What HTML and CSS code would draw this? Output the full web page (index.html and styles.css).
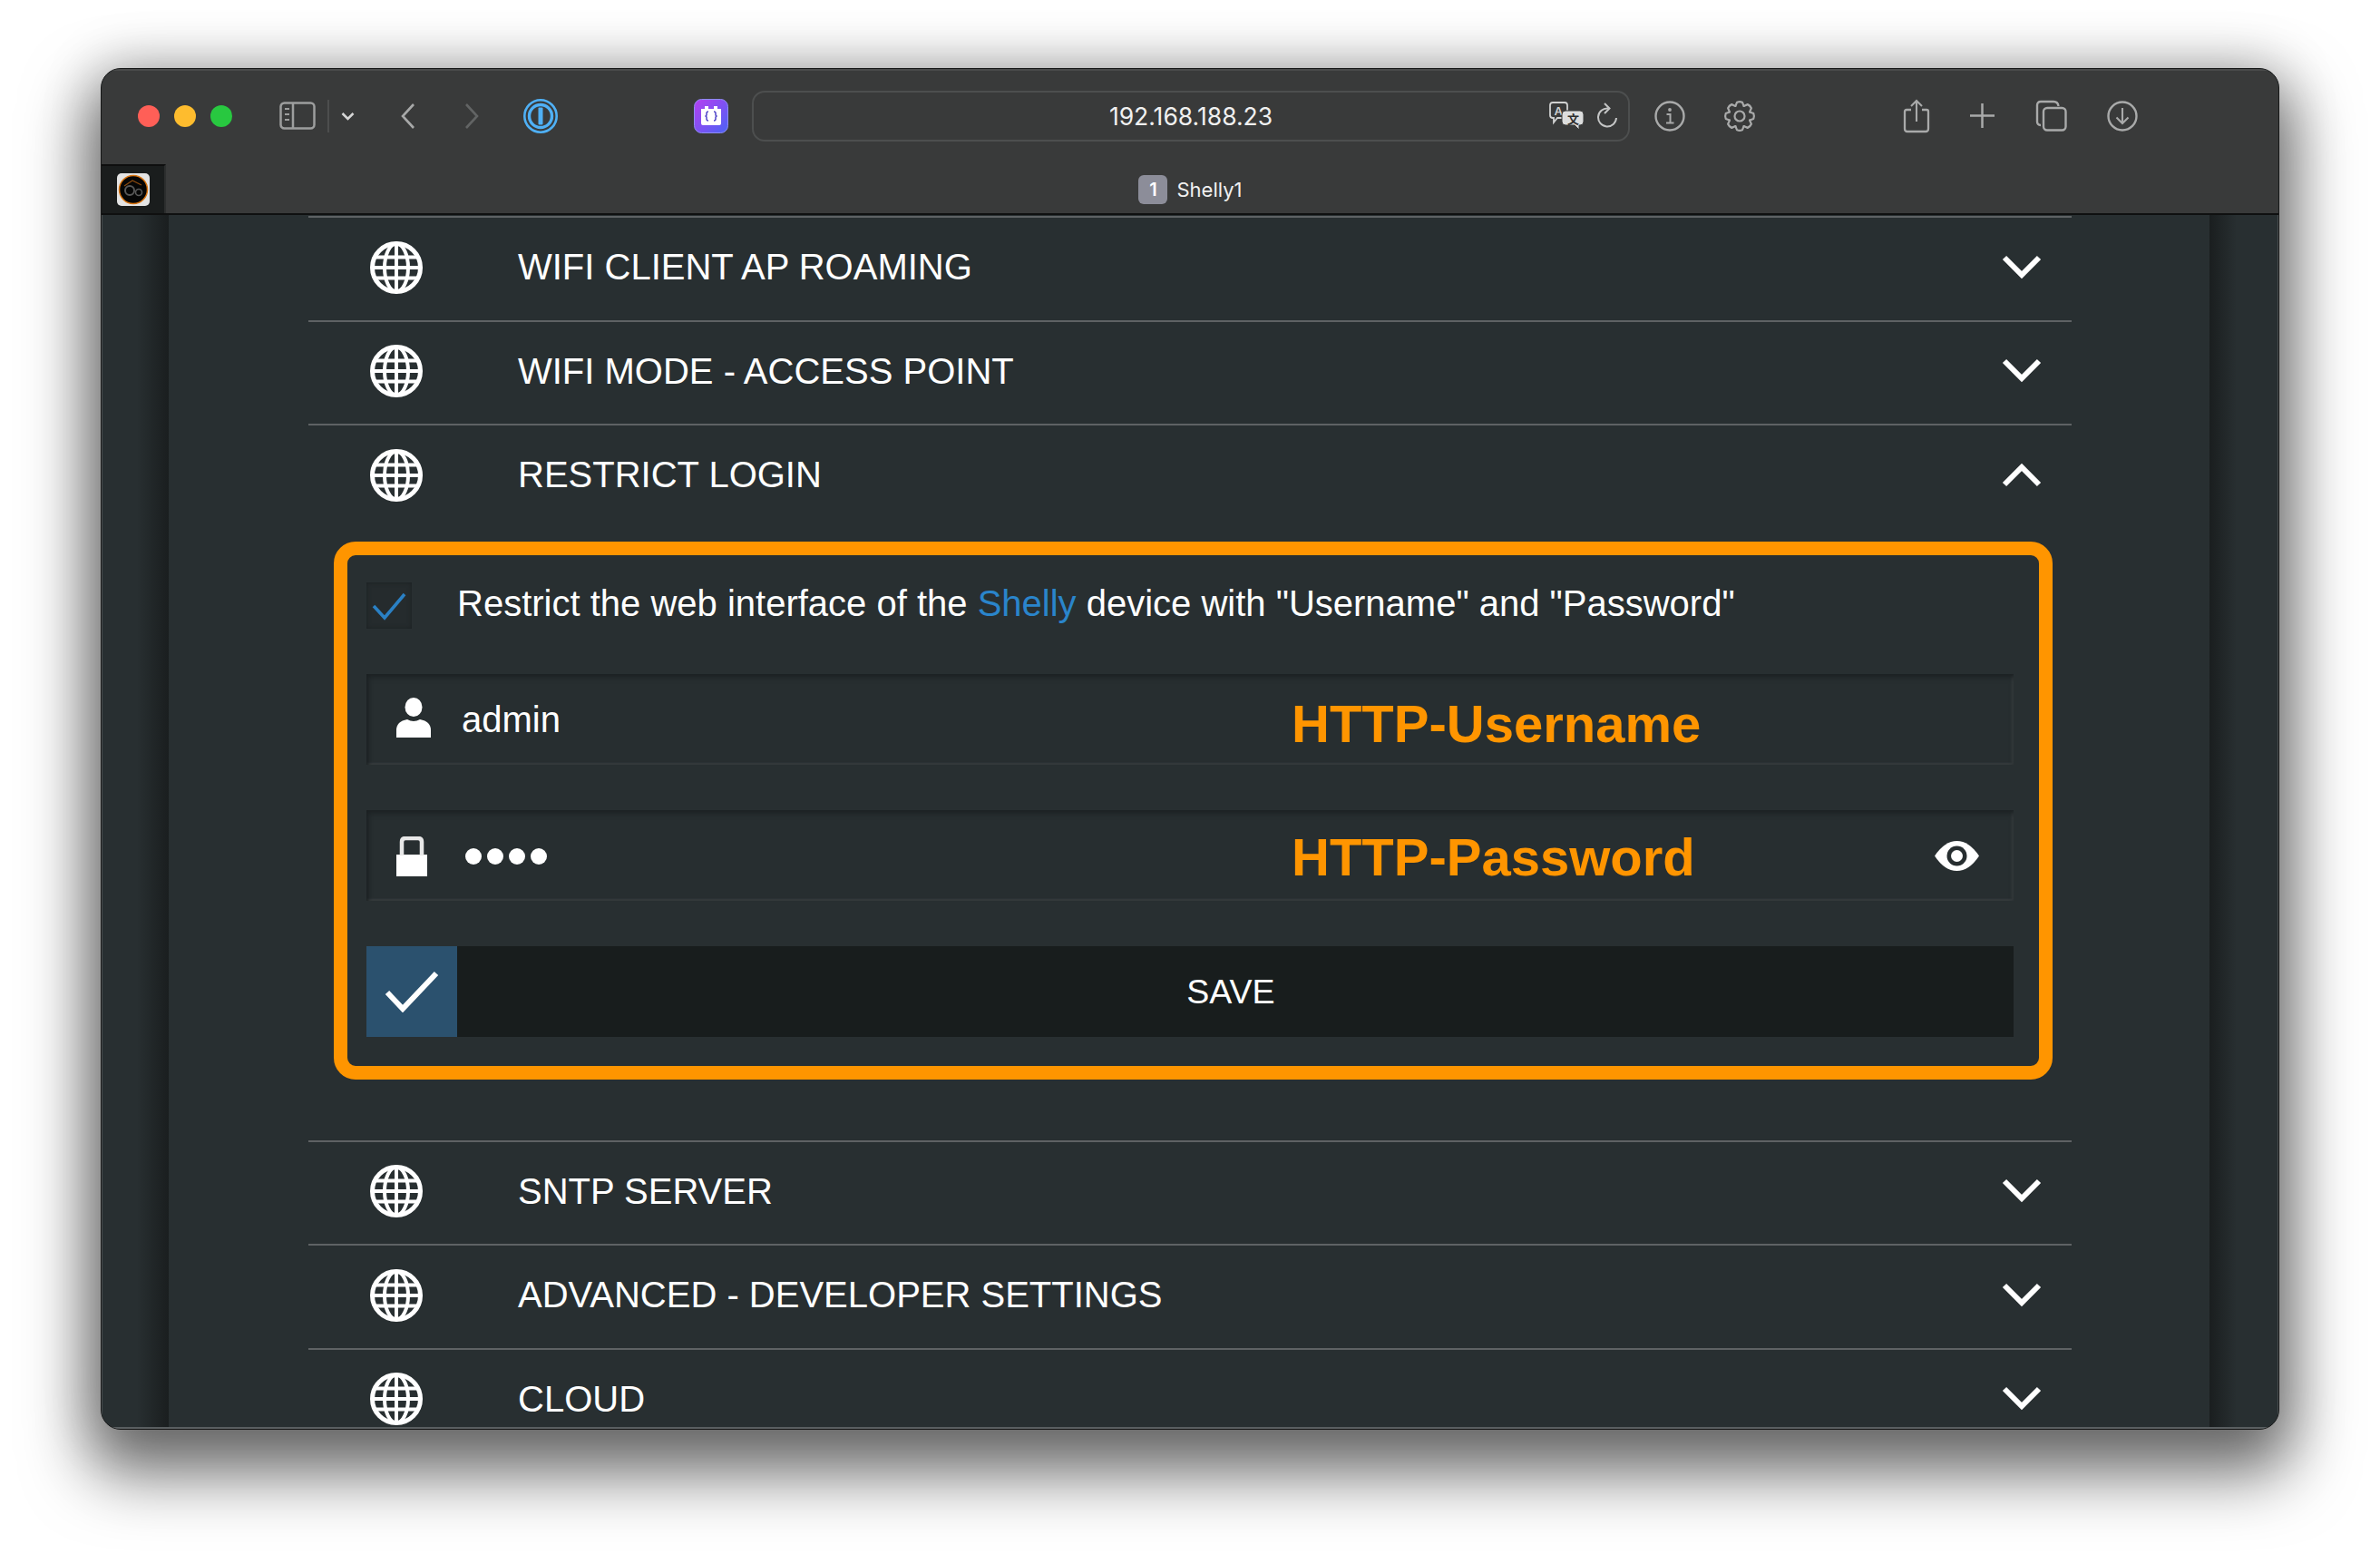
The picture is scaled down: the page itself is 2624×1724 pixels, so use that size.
FILE: index.html
```html
<!DOCTYPE html>
<html lang="en">
<head>
<meta charset="utf-8">
<title>Shelly1</title>
<link rel="stylesheet" href="styles.css">
</head>
<body>
<svg class="defs" width="0" height="0" aria-hidden="true">
  <defs>
    <symbol id="globe" viewBox="0 0 58 58">
      <circle cx="29" cy="29" r="26.500" fill="none" stroke="#fff" stroke-width="5"/>
      <ellipse cx="29" cy="29" rx="13" ry="26.500" fill="none" stroke="#fff" stroke-width="4"/>
      <path d="M29 3V55M5 17.500H53M3 29H55M5 40.500H53" fill="none" stroke="#fff" stroke-width="4"/>
    </symbol>
    <symbol id="down" viewBox="0 0 44 28">
      <path d="M3 4L22 23L41 4" fill="none" stroke="#fff" stroke-width="6"/>
    </symbol>
    <symbol id="up" viewBox="0 0 44 28">
      <path d="M3 24L22 5L41 24" fill="none" stroke="#fff" stroke-width="6"/>
    </symbol>
    <path id="gear-tooth" d="M-4.600 -11.100L-2.900 -15.300Q0 -16.500 2.900 -15.300L4.600 -11.100" fill="none" stroke="#a9aaaa" stroke-width="2.200" stroke-linejoin="round" stroke-linecap="round"/>
  </defs>
</svg>
<div class="window">
  <header class="toolbar">
    <div class="nav-row">
      <span class="light light-red"></span>
      <span class="light light-yellow"></span>
      <span class="light light-green"></span>
      <svg class="ti sidebar-ic" width="40" height="31" viewBox="0 0 40 31"><rect x="1.500" y="1.500" width="37" height="28" rx="4" fill="none" stroke="#9d9e9e" stroke-width="2.500"/><path d="M15 2V29" stroke="#9d9e9e" stroke-width="2.500"/><path d="M6 8H11M6 14H11M6 20H11" stroke="#9d9e9e" stroke-width="2"/></svg>
      <span class="vsep"></span>
      <svg class="ti chev-ic" width="15" height="10" viewBox="0 0 15 10"><path d="M1.500 2L7.500 8L13.500 2" fill="none" stroke="#d6d6d6" stroke-width="2.500"/></svg>
      <svg class="ti back-ic" width="17" height="30" viewBox="0 0 17 30"><path d="M15 2L3 15L15 28" fill="none" stroke="#a8a9a9" stroke-width="2.600"/></svg>
      <svg class="ti fwd-ic" width="17" height="30" viewBox="0 0 17 30"><path d="M2 2L14 15L2 28" fill="none" stroke="#626464" stroke-width="2.600"/></svg>
      <svg class="ti onep-ic" width="38" height="38" viewBox="0 0 38 38"><circle cx="19" cy="19" r="17.700" fill="none" stroke="#4fb0f5" stroke-width="2.600"/><circle cx="19" cy="19" r="12.500" fill="none" stroke="#4fb0f5" stroke-width="3.400"/><rect x="16.500" y="9.500" width="5" height="19" rx="1" fill="#4fb0f5"/></svg>
      <svg class="ti ext-ic" width="38" height="38" viewBox="0 0 38 38"><defs><linearGradient id="extg" x1="0" y1="0" x2="1" y2="1"><stop offset="0" stop-color="#b63ff0"/><stop offset="1" stop-color="#4a63f6"/></linearGradient></defs><rect x="0.500" y="0.500" width="37" height="37" rx="8" fill="url(#extg)" stroke="#8f8cf0"/><path d="M8 11H12V8H16V11H22V8H26V11H30V27Q30 29 28 29H10Q8 29 8 27Z" fill="#fff"/><path d="M16 14Q14 14 14 16V18L13 19L14 20V22Q14 24 16 24M22 14Q24 14 24 16V18L25 19L24 20V22Q24 24 22 24" fill="none" stroke="#5146c8" stroke-width="1.500"/></svg>
      <div class="urlbar">
        <span class="url-text">192.168.188.23</span>
        <svg class="ti translate-ic" width="39" height="32" viewBox="0 0 39 32"><path d="M4 1H17Q20 1 20 4V15Q20 18 17 18H9L5 23V18H4Q1 18 1 15V4Q1 1 4 1Z" fill="#393a3a" stroke="#d0d1d1" stroke-width="1.800"/><text class="tr-a" x="5.500" y="15">A</text><path d="M18 10H34Q38 10 38 14V22Q38 26 34 26H33V31L28 26H18Q14 26 14 22V14Q14 10 18 10Z" fill="#dcdddd" stroke="#393a3a" stroke-width="1"/><text class="tr-b" x="20" y="24">文</text></svg>
        <svg class="ti reload-ic" width="24" height="30" viewBox="0 0 24 30"><path d="M13 6.500A10 10 0 1 0 22 17" fill="none" stroke="#c4c5c5" stroke-width="2"/><path d="M9 1L14.500 6.500L9 12" fill="none" stroke="#c4c5c5" stroke-width="2"/></svg>
      </div>
      <svg class="ti info-ic" width="34" height="34" viewBox="0 0 34 34"><circle cx="17" cy="17" r="15.500" fill="none" stroke="#a9aaaa" stroke-width="2.400"/><circle cx="17" cy="10" r="1.900" fill="#a9aaaa"/><path d="M13.500 15H17.500V24M13 24.500H21.500" fill="none" stroke="#a9aaaa" stroke-width="2"/></svg>
      <svg class="ti gear-ic" width="36" height="36" viewBox="0 0 36 36"><g transform="translate(18 18)"><use href="#gear-tooth"/><use href="#gear-tooth" transform="rotate(45)"/><use href="#gear-tooth" transform="rotate(90)"/><use href="#gear-tooth" transform="rotate(135)"/><use href="#gear-tooth" transform="rotate(180)"/><use href="#gear-tooth" transform="rotate(225)"/><use href="#gear-tooth" transform="rotate(270)"/><use href="#gear-tooth" transform="rotate(315)"/><circle r="5.500" fill="none" stroke="#a9aaaa" stroke-width="2.200"/></g></svg>
      <svg class="ti share-ic" width="30" height="38" viewBox="0 0 30 38"><path d="M9 12H4Q2 12 2 14V33Q2 36 5 36H25Q28 36 28 33V14Q28 12 26 12H21" fill="none" stroke="#a9aaaa" stroke-width="2.300"/><path d="M15 25V2M9 8L15 2L21 8" fill="none" stroke="#a9aaaa" stroke-width="2.100"/></svg>
      <svg class="ti plus-ic" width="27" height="27" viewBox="0 0 27 27"><path d="M13.500 0V27M0 13.500H27" stroke="#a9aaaa" stroke-width="2.500"/></svg>
      <svg class="ti tabs-ic" width="35" height="35" viewBox="0 0 35 35"><path d="M6 28Q2 28 2 24V6Q2 2 6 2H20Q25 2 25.500 7" fill="none" stroke="#a9aaaa" stroke-width="2.400"/><rect x="9" y="9" width="24.500" height="24.500" rx="4" fill="#393a3a" stroke="#a9aaaa" stroke-width="2.400"/></svg>
      <svg class="ti dl-ic" width="34" height="34" viewBox="0 0 34 34"><circle cx="17" cy="17" r="15.500" fill="none" stroke="#a9aaaa" stroke-width="2.400"/><path d="M17 8V25M10.500 18.500L17 25L23.500 18.500" fill="none" stroke="#a9aaaa" stroke-width="2.100"/></svg>
    </div>
    <div class="tab-row">
      <div class="pinned">
        <svg width="36" height="36" viewBox="0 0 36 36"><rect width="36" height="36" rx="5" fill="#e4e4e4"/><circle cx="18" cy="18" r="15.500" fill="#060606" stroke="#d9740f" stroke-width="1.500"/><path d="M8 14L17 8L27 13" fill="none" stroke="#8a4a10" stroke-width="1.300"/><circle cx="14" cy="19" r="5" fill="none" stroke="#585858" stroke-width="2"/><circle cx="24" cy="21" r="3.500" fill="none" stroke="#585858" stroke-width="1.600"/></svg>
      </div>
      <div class="tab-title"><span class="tab-badge">1</span><span class="tab-name">Shelly1</span></div>
    </div>
  </header>
  <main class="content">
    <div class="gutter gutter-left"></div>
    <div class="panel">
      <section class="row">
        <svg class="globe"><use href="#globe"/></svg><span class="row-label">WIFI CLIENT AP ROAMING</span><svg class="arrow"><use href="#down"/></svg>
      </section>
      <section class="row">
        <svg class="globe"><use href="#globe"/></svg><span class="row-label">WIFI MODE - ACCESS POINT</span><svg class="arrow"><use href="#down"/></svg>
      </section>
      <section class="row">
        <svg class="globe"><use href="#globe"/></svg><span class="row-label">RESTRICT LOGIN</span><svg class="arrow arrow-up"><use href="#up"/></svg>
      </section>
      <div class="highlight">
        <div class="check-line">
          <span class="checkbox"><svg width="38" height="36" viewBox="0 0 38 36"><path d="M2 19L14 32L36 6" fill="none" stroke="#2a80c4" stroke-width="3.500"/></svg></span>
          <span class="check-text">Restrict the web interface of the <span class="brand">Shelly</span> device with "Username" and "Password"</span>
        </div>
        <div class="field">
          <svg class="field-ic user-ic" width="38" height="44" viewBox="0 0 38 44"><ellipse cx="19" cy="10.500" rx="9.500" ry="10.500" fill="#fff"/><path d="M0 44V36Q0 26 12 24Q19 28 26 24Q38 26 38 36V44Z" fill="#fff"/></svg>
          <span class="field-value">admin</span>
          <span class="field-note note-user">HTTP-Username</span>
        </div>
        <div class="field">
          <svg class="field-ic lock-ic" width="34" height="44" viewBox="0 0 34 44"><path d="M0 20H34V44H0Z" fill="#fff"/><path d="M6 21V6Q6 2 10 2H24Q28 2 28 6V21" fill="none" stroke="#e8e8e8" stroke-width="4.500"/></svg>
          <span class="dots"><i></i><i></i><i></i><i></i></span>
          <span class="field-note note-pass">HTTP-Password</span>
          <svg class="eye-ic" width="49" height="33" viewBox="0 0 49 33"><path d="M0 16.500Q11 0 24.500 0Q38 0 49 16.500Q38 33 24.500 33Q11 33 0 16.500Z" fill="#fff"/><circle cx="24.500" cy="16.500" r="11" fill="#272e30"/><circle cx="24.500" cy="16.500" r="6.500" fill="#fff"/></svg>
        </div>
        <button class="save" type="button">
          <span class="save-mark"><svg width="60" height="46" viewBox="0 0 60 46"><path d="M3 24L20 42L57 3" fill="none" stroke="#fff" stroke-width="6"/></svg></span>
          <span class="save-label">SAVE</span>
        </button>
      </div>
      <section class="row row-after">
        <svg class="globe"><use href="#globe"/></svg><span class="row-label">SNTP SERVER</span><svg class="arrow"><use href="#down"/></svg>
      </section>
      <section class="row">
        <svg class="globe"><use href="#globe"/></svg><span class="row-label">ADVANCED - DEVELOPER SETTINGS</span><svg class="arrow"><use href="#down"/></svg>
      </section>
      <section class="row">
        <svg class="globe"><use href="#globe"/></svg><span class="row-label">CLOUD</span><svg class="arrow"><use href="#down"/></svg>
      </section>
    </div>
    <div class="gutter gutter-right"></div>
  </main>
</div>
</body>
</html>
```
FILE: styles.css
```css
* { box-sizing: border-box; }
html, body { margin: 0; height: 100%; }
body {
  width: 2624px;
  height: 1724px;
  padding: 75px 111px 0 111px;
  background: #fff;
  overflow: hidden;
  font-family: "Liberation Sans", Arial, sans-serif;
}
.defs { position: absolute; }
.window {
  height: 1501px;
  border-radius: 22px;
  border: 1px solid #161717;
  background: #282f31;
  overflow: hidden;
  display: flex;
  flex-direction: column;
  box-shadow: 0 36px 70px 14px rgba(0,0,0,.55), 0 0 60px 6px rgba(0,0,0,.18);
}
.toolbar {
  height: 161px;
  flex: none;
  background: #393a3a;
  border-bottom: 2px solid #0f1010;
  display: flex;
  flex-direction: column;
  border-top: 2px solid #4a4b4b;
}
.nav-row {
  height: 103px;
  flex: none;
  display: flex;
  align-items: center;
  padding-left: 40px;
  padding-bottom: 4px;
}
.light { width: 24px; height: 24px; border-radius: 50%; margin-right: 16px; flex: none; }
.light-red { background: #ff5f57; }
.light-yellow { background: #febc2e; }
.light-green { background: #28c840; }
.ti { flex: none; display: block; }
.sidebar-ic { margin-left: 36px; }
.vsep { width: 2px; height: 36px; background: #4d4e4e; margin-left: 13px; flex: none; }
.chev-ic { margin-left: 13px; }
.back-ic { margin-left: 50px; }
.fwd-ic { margin-left: 54px; }
.onep-ic { margin-left: 48px; }
.ext-ic { margin-left: 150px; }
.urlbar {
  position: relative;
  margin-left: 26px;
  width: 968px;
  height: 56px;
  flex: none;
  border: 2px solid #4d4f4f;
  border-radius: 14px;
  display: flex;
  align-items: center;
  justify-content: flex-end;
  padding-right: 11px;
  gap: 13px;
}
.url-text {
  position: absolute;
  left: 0;
  right: 0;
  text-align: center;
  padding-left: 0;
  font: 26.500px "Inter", "Liberation Sans", sans-serif;
  color: #f0f0f0;
}
.tr-a { font: bold 13px "Liberation Sans", sans-serif; fill: #d0d1d1; }
.tr-b { font: bold 13px "Noto Sans CJK SC", sans-serif; fill: #2c2d2d; }
.info-ic { margin-left: 27px; }
.gear-ic { margin-left: 42px; }
.share-ic { margin-left: 162px; }
.plus-ic { margin-left: 44px; }
.tabs-ic { margin-left: 45px; }
.dl-ic { margin-left: 44px; }
.tab-row { flex: 1; display: flex; position: relative; }
.pinned {
  width: 71px;
  background: #1a1d1d;
  border-top: 2px solid #0e0f0f;
  border-right: 2px solid #2c2e2e;
  display: flex;
  align-items: center;
  padding-left: 17px;
}
.pinned svg { display: block; }
.tab-title {
  flex: 1;
  display: flex;
  align-items: center;
  justify-content: center;
  gap: 10px;
  padding-right: 70px;
  padding-top: 2px;
}
.tab-badge {
  width: 32px;
  height: 32px;
  border-radius: 6px;
  background: #8c8d99;
  color: #fff;
  display: flex;
  align-items: center;
  justify-content: center;
  font: 600 20px "Inter", sans-serif;
}
.tab-name { font: 22px "Inter", "Liberation Sans", sans-serif; color: #f0f0f0; }
.content { flex: 1; min-height: 0; display: flex; border-bottom: 2px solid #5a5f61; }
.gutter { flex: none; }
.gutter-left { width: 74px; background: linear-gradient(to right, #282f31 52%, #1a1e1f 100%); border-left: 1px solid #4a4f51; }
.gutter-right { width: 76px; background: linear-gradient(to left, #282f31 60%, #1a1e1f 100%); border-right: 1px solid #4a4f51; }
.panel { flex: 1; padding: 1px 152px 0 154px; background: #282f31; overflow: hidden; }
.row {
  height: 114.500px;
  display: flex;
  align-items: center;
  border-top: 2px solid #5e6264;
  padding-left: 68px;
  padding-right: 33px;
  color: #fff;
}
.row-after { margin-top: 67px; }
.globe { width: 58px; height: 58px; flex: none; margin-top: -3px; }
.row-label { flex: 1; margin-left: 105px; font-size: 40px; color: #fff; white-space: nowrap; margin-top: -3px; }
.arrow { width: 44px; height: 28px; flex: none; margin-top: -5px; }
.arrow-up { margin-top: -3px; }
.highlight {
  margin: 15px 21px 0 28px;
  height: 593px;
  border: 15px solid #ff9500;
  border-radius: 24px;
  padding: 30px 28px 0 21px;
  display: flex;
  flex-direction: column;
}
.check-line { height: 51px; display: flex; align-items: center; }
.checkbox {
  width: 50px;
  height: 51px;
  flex: none;
  background: #252b2d;
  box-shadow: inset 0 0 5px #1b2022;
  display: flex;
  align-items: center;
  justify-content: center;
}
.checkbox svg { display: block; }
.check-text { margin-left: 50px; font-size: 40px; color: #fff; white-space: nowrap; margin-top: -4px; }
.brand { color: #2a85cb; }
.field {
  margin-top: 50px;
  height: 100px;
  display: flex;
  align-items: center;
  position: relative;
  background: #272e30;
  box-shadow: inset 0 5px 6px -2px #1b2022, inset 4px 0 5px -2px #1d2224, inset -3px 0 3px -1px #3a4042, inset 0 -3px 2px -1px #3c4244;
  color: #fff;
  padding-left: 33px;
}
.field-ic { flex: none; display: block; }
.user-ic { margin-top: -4px; }
.lock-ic { margin-top: 2px; }
.field-value { margin-left: 34px; font-size: 40px; margin-top: 2px; }
.lock-ic + .dots { margin-left: 42px; }
.dots { display: flex; gap: 6px; margin-top: 2px; }
.dots i { width: 18px; height: 18px; border-radius: 50%; background: #fff; display: block; }
.field-note {
  position: absolute;
  left: 1020px;
  font-size: 58px;
  line-height: 62px;
  font-weight: bold;
  color: #ff9500;
  white-space: nowrap;
}
.note-user { top: 24px; }
.note-pass { top: 21px; }
.eye-ic { position: absolute; right: 38px; top: 34px; }
.save {
  margin-top: 50px;
  height: 100px;
  width: 100%;
  flex: none;
  border: 0;
  padding: 0;
  background: #181d1d;
  display: flex;
  font-family: inherit;
}
.save-mark {
  width: 100px;
  height: 100px;
  flex: none;
  background: #2b516e;
  display: flex;
  align-items: center;
  justify-content: center;
}
.save-label { flex: 1; text-align: center; line-height: 100px; font-size: 37.500px; color: #fff; margin-right: 10px; }
```
